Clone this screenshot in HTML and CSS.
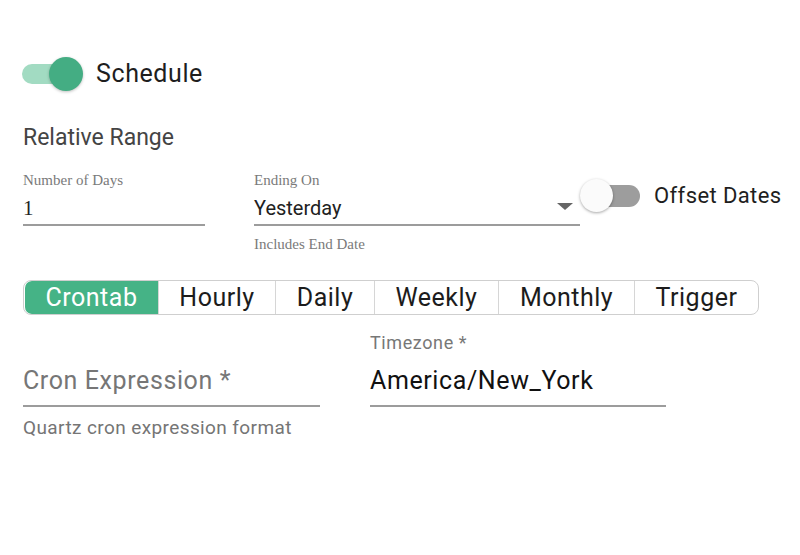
FILE: index.html
```html
<!DOCTYPE html>
<html lang="en">
<head>
<meta charset="utf-8">
<title>Schedule</title>
<link rel="stylesheet" href="styles.css">
</head>
<body>
<div class="page">
  <div class="schedule-row">
    <span class="switch on"><span class="track"></span><span class="thumb"></span></span>
    <span class="schedule-label">Schedule</span>
  </div>

  <div class="section-title">Relative Range</div>

  <div class="fields-row">
    <div class="field f-days">
      <div class="s-label">Number of Days</div>
      <div class="s-value"><span class="serif-val">1</span></div>
    </div>
    <div class="field f-ending">
      <div class="s-label">Ending On</div>
      <div class="s-value select"><span class="sel-val">Yesterday</span>
        <svg class="arrow" width="16" height="7" viewBox="0 0 16 7"><path d="M0 0H16L8 7Z" fill="#666"/></svg>
      </div>
      <div class="s-helper">Includes End Date</div>
    </div>
    <div class="offset-row">
      <span class="switch off"><span class="track"></span><span class="thumb"></span></span>
      <span class="offset-label">Offset Dates</span>
    </div>
  </div>

  <div class="tabs">
    <div class="tab active">Crontab</div>
    <div class="tab">Hourly</div>
    <div class="tab">Daily</div>
    <div class="tab">Weekly</div>
    <div class="tab">Monthly</div>
    <div class="tab">Trigger</div>
  </div>

  <div class="cron-grid">
    <div></div>
    <div class="r-label">Timezone *</div>
    <div class="r-value placeholder">Cron Expression *</div>
    <div class="r-value">America/New_York</div>
    <div class="r-helper">Quartz cron expression format</div>
    <div></div>
  </div>
</div>
</body>
</html>
```

FILE: styles.css
```css
html, body {
  margin: 0;
  padding: 0;
  background: #ffffff;
}
body {
  font-family: Roboto, "Liberation Sans", Arial, sans-serif;
  color: #212121;
  width: 800px;
  height: 555px;
  overflow: hidden;
}
.page {
  padding-left: 22px;
}

/* switches */
.switch {
  position: relative;
  display: inline-block;
  flex: none;
  height: 34px;
}
.switch .track {
  display: block;
  position: absolute;
}
.switch .thumb {
  position: absolute;
  top: 0;
  width: 34px;
  height: 34px;
  border-radius: 50%;
}
.switch.on {
  width: 61px;
}
.switch.on .track {
  left: 0;
  top: 7px;
  width: 56px;
  height: 20px;
  border-radius: 10px;
  background: #a2dbc2;
}
.switch.on .thumb {
  right: 0;
  background: #44ad83;
  box-shadow: 0 1px 3px rgba(0,0,0,0.25);
}
.switch.off {
  width: 60px;
}
.switch.off .track {
  right: 0;
  top: 6px;
  width: 54px;
  height: 22px;
  border-radius: 11px;
  background: #9d9d9d;
}
.switch.off .thumb {
  left: 0;
  width: 33px;
  height: 33px;
  background: #fbfbfb;
  box-shadow: 0 1px 3px rgba(0,0,0,0.35);
}

.schedule-row {
  margin-top: 57px;
  height: 34px;
  display: flex;
  align-items: center;
}
.schedule-label {
  margin-left: 13px;
  font-size: 25px;
  letter-spacing: 0.6px;
  line-height: 34px;
  color: #1e1e1e;
}

.section-title {
  margin-top: 33px;
  margin-left: 1px;
  font-size: 23px;
  line-height: 28px;
  color: #444444;
}

/* relative range fields */
.fields-row {
  margin-top: 19px;
  display: flex;
  align-items: flex-start;
}
.field {
  flex: none;
}
.f-days {
  width: 182px;
  margin-left: 1px;
}
.f-ending {
  width: 326px;
  margin-left: 49px;
}
.s-label, .s-helper {
  font-family: "Liberation Serif", "Times New Roman", serif;
  font-size: 15px;
  line-height: 18px;
  color: #7a7a7a;
}
.s-value {
  margin-top: 4px;
  height: 31px;
  line-height: 31px;
  border-bottom: 2px solid #9c9c9c;
  display: flex;
  justify-content: space-between;
  align-items: flex-start;
}
.serif-val {
  font-family: "Liberation Serif", "Times New Roman", serif;
  font-size: 21px;
  color: #222222;
}
.sel-val {
  font-size: 20px;
  color: #212121;
}
.arrow {
  margin-top: 10px;
  margin-right: 7px;
}
.s-helper {
  margin-top: 9px;
}
.offset-row {
  margin-top: 8px;
  display: flex;
  align-items: center;
  height: 34px;
}
.offset-label {
  margin-left: 14px;
  font-size: 22px;
  letter-spacing: 0.4px;
  line-height: 30px;
  color: #1e1e1e;
}

/* tabs */
.tabs {
  margin-top: 27px;
  margin-left: 1px;
  width: 734px;
  height: 33px;
  border: 1px solid #cfcfcf;
  border-radius: 8px;
  display: flex;
  overflow: hidden;
}
.tab {
  flex: none;
  box-sizing: border-box;
  text-align: center;
  font-size: 25px;
  letter-spacing: 0.5px;
  line-height: 33px;
  color: #1c1c1c;
  border-left: 1px solid #d6d6d6;
}
.tab:first-child {
  border-left: none;
  margin-left: 1px;
}
.tab.active {
  background: #45b386;
  color: #ffffff;
  border-radius: 7px 0 0 7px;
  width: 133px;
}
.tab:nth-child(2) { width: 117px; }
.tab:nth-child(3) { width: 99px; }
.tab:nth-child(4) { width: 124px; }
.tab:nth-child(5) { width: 136px; }
.tab:nth-child(6) { width: 124px; }

/* cron row */
.cron-grid {
  margin-top: 17px;
  margin-left: 1px;
  display: grid;
  grid-template-columns: 297px 296px;
  column-gap: 50px;
}
.r-label {
  font-size: 18px;
  letter-spacing: 0.6px;
  line-height: 22px;
  color: #777777;
}
.r-value {
  margin-top: 10px;
  height: 34px;
  padding-bottom: 7px;
  line-height: 34px;
  font-size: 25px;
  letter-spacing: 0.6px;
  color: #111111;
  border-bottom: 2px solid #9c9c9c;
  white-space: nowrap;
}
.r-value.placeholder {
  color: #767676;
}
.r-helper {
  margin-top: 10px;
  font-size: 19px;
  letter-spacing: 0.4px;
  line-height: 22px;
  color: #757575;
  white-space: nowrap;
}
```
